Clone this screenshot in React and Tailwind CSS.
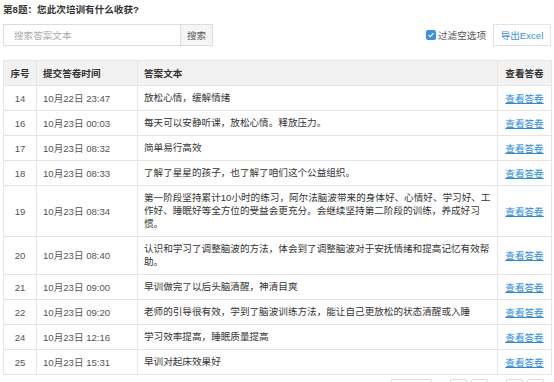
import React from 'react';

// Answers for question 8, as listed in the survey result table.
const ROWS = [
  { no: 14, time: '10月22日 23:47', text: '放松心情，缓解情绪' },
  { no: 16, time: '10月23日 00:03', text: '每天可以安静听课，放松心情。释放压力。' },
  { no: 17, time: '10月23日 08:32', text: '简单易行高效' },
  { no: 18, time: '10月23日 08:33', text: '了解了星星的孩子，也了解了咱们这个公益组织。' },
  {
    no: 19,
    time: '10月23日 08:34',
    text: '第一阶段坚持累计10小时的练习，阿尔法脑波带来的身体好、心情好、学习好、工作好、睡眠好等全方位的受益会更充分。会继续坚持第二阶段的训练，养成好习惯。',
  },
  {
    no: 20,
    time: '10月23日 08:40',
    text: '认识和学习了调整脑波的方法，体会到了调整脑波对于安抚情绪和提高记忆有效帮助。',
  },
  { no: 21, time: '10月23日 09:00', text: '早训做完了以后头脑清醒，神清目爽' },
  { no: 22, time: '10月23日 09:20', text: '老师的引导很有效，学到了脑波训练方法，能让自己更放松的状态清醒或入睡' },
  { no: 24, time: '10月23日 12:16', text: '学习效率提高，睡眠质量提高' },
  { no: 25, time: '10月23日 15:31', text: '早训对起床效果好' },
];

const FONT = "font-['Liberation_Sans','Noto_Sans_CJK_SC',sans-serif]";

function Checkbox() {
  return (
    <span className="inline-flex h-[10px] w-[10px] items-center justify-center rounded-[2px] bg-[#3d8fe0]">
      <svg viewBox="0 0 10 10" className="h-[8px] w-[8px]">
        <path d="M2 5.2 L4.2 7.2 L8 2.8" fill="none" stroke="white" strokeWidth="1.5" />
      </svg>
    </span>
  );
}

export default function App() {
  return (
    <div className={`${FONT} h-[382px] w-[554px] overflow-hidden bg-white px-[3px] text-[9.6px] leading-[13px] text-[#333] [text-spacing-trim:space-all]`}>
      <div className="pt-[3px] font-bold text-[#333]">第8题：您此次培训有什么收获?</div>

      <div className="mt-[8px] flex h-[22px] items-stretch">
        <div className="flex w-[178px] items-center border border-[#ddd] pl-[10px] text-[#aaa]">搜索答案文本</div>
        <div className="flex w-[32px] items-center justify-center border border-l-0 border-[#ddd] bg-[#f5f5f5] text-[#555]">
          搜索
        </div>
        <div className="flex-1" />
        <label className="mr-[7px] flex items-center gap-[2px] text-[#555]">
          <Checkbox />
          过滤空选项
        </label>
        <div className="flex w-[58px] items-center justify-center border border-[#e3e3e3] text-[#3d8fe0]">导出Excel</div>
      </div>

      <table className="mt-[14px] w-[548px] table-fixed border-collapse">
        <colgroup>
          <col className="w-[33px]" />
          <col className="w-[101px]" />
          <col className="w-[360px]" />
          <col className="w-[54px]" />
        </colgroup>
        <thead>
          <tr className="h-[25px] bg-[#f2f2f2] font-bold">
            <th className="border border-[#e5e5e5] text-center">序号</th>
            <th className="border border-[#e5e5e5] pl-[6px] text-left">提交答卷时间</th>
            <th className="border border-[#e5e5e5] pl-[6px] text-left">答案文本</th>
            <th className="border border-[#e5e5e5] text-center">查看答卷</th>
          </tr>
        </thead>
        <tbody>
          {ROWS.map((r) => (
            <tr key={r.no}>
              <td className="border border-[#e5e5e5] text-center text-[#555]">{r.no}</td>
              <td className="border border-[#e5e5e5] pl-[6px] text-[#555]">{r.time}</td>
              <td className="border border-[#e5e5e5] px-[6px] pt-[5px] pb-[6px]">{r.text}</td>
              <td className="border border-[#e5e5e5] text-center">
                <a className="text-[#2a8ad8] underline">查看答卷</a>
              </td>
            </tr>
          ))}
        </tbody>
      </table>

      <div className="mt-[4px] flex justify-end gap-[4px] pr-[7px]">
        <div className="mr-[14px] h-[20px] w-[41px] rounded-[2px] border border-[#ddd]" />
        <div className="h-[20px] w-[17px] rounded-[2px] border border-[#ddd]" />
        <div className="mr-[14px] h-[20px] w-[17px] rounded-[2px] border border-[#ddd]" />
        <div className="h-[20px] w-[17px] rounded-[2px] border border-[#ddd]" />
        <div className="h-[20px] w-[17px] rounded-[2px] border border-[#ddd]" />
      </div>
    </div>
  );
}
